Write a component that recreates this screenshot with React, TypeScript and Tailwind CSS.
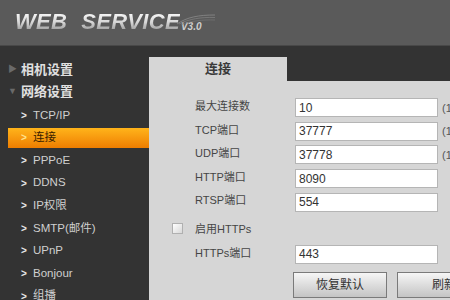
import React from "react";

const font = { fontFamily: '"Liberation Sans", Arial, "Noto Sans CJK SC", sans-serif' };

const subItems = ["TCP/IP", "连接", "PPPoE", "DDNS", "IP权限", "SMTP(邮件)", "UPnP", "Bonjour", "组播"];

const fields = [
  { label: "最大连接数", value: "10", hint: "(1~20)" },
  { label: "TCP端口", value: "37777", hint: "(1025~65535)" },
  { label: "UDP端口", value: "37778", hint: "(1025~65535)" },
  { label: "HTTP端口", value: "8090", hint: "" },
  { label: "RTSP端口", value: "554", hint: "" },
];

function Logo() {
  return (
    <div className="relative flex items-end pl-[15px] pt-[11px]">
      <span className="text-[22px] font-bold italic leading-none bg-linear-to-b from-white via-[#d8d8d8] to-[#8c8c8c] bg-clip-text text-transparent tracking-[0.3px]">
        WEB
      </span>
      <span className="ml-[14px] text-[22px] font-bold italic leading-none bg-linear-to-b from-white via-[#d8d8d8] to-[#8c8c8c] bg-clip-text text-transparent tracking-[0.3px]">
        SERVICE
      </span>
      <span className="relative ml-[1px] mb-[1px] text-[10px] font-bold italic leading-none text-[#cfcfcf]">
        V3.0
        <svg className="absolute -top-[9px] -left-[4px]" width="40" height="12" viewBox="0 0 40 12" fill="none">
          <path d="M0 11 C10 4 22 2 38 2" stroke="#8a8a8a" strokeWidth="0.8" />
          <path d="M2 11 C12 6 24 4 38 4.5" stroke="#7d7d7d" strokeWidth="0.8" />
          <path d="M4 11.5 C14 8 26 6.5 38 7" stroke="#727272" strokeWidth="0.8" />
        </svg>
      </span>
    </div>
  );
}

function Sidebar() {
  return (
    <div className="w-[149px] shrink-0 pt-[13px]">
      <div className="flex items-center h-[22px] pl-[8px]">
        <span className="text-[9px] text-[#6a6a6a] w-[13px]">▶</span>
        <span className="text-[13px] font-bold text-[#e0e0e0]">相机设置</span>
      </div>
      <div className="flex items-center h-[22px] pl-[8px]">
        <span className="text-[9px] text-[#6a6a6a] w-[13px]">▼</span>
        <span className="text-[13px] font-bold text-[#e0e0e0]">网络设置</span>
      </div>
      <div className="pt-[1px]">
        {subItems.map((item) => {
          const active = item === "连接";
          return (
            <div key={item} className="h-[22.6px] flex items-center">
              <div
                className={
                  active
                    ? "ml-[8px] flex-1 h-[20px] flex items-center pl-[13px] bg-linear-to-b from-[#ffb41a] to-[#ee7d00]"
                    : "ml-[8px] flex-1 h-[20px] flex items-center pl-[13px]"
                }
              >
                <span className={active ? "text-[10px] font-bold text-[#ffe38a] w-[12px]" : "text-[10px] font-bold text-[#e8e8e8] w-[12px]"}>
                  &gt;
                </span>
                <span className={active ? "text-[11.5px] text-[#3a2200]" : "text-[11.5px] text-[#cfcfcf]"}>{item}</span>
              </div>
            </div>
          );
        })}
      </div>
    </div>
  );
}

function Field({ label, value, hint }: { label: string; value: string; hint: string }) {
  return (
    <div className="h-[23.6px] flex items-center">
      <div className="w-[146px] shrink-0 text-[11px] text-[#454545] pl-[46px] -mt-[3px] whitespace-nowrap">{label}</div>
      <div className="w-[143px] shrink-0 h-[19px] bg-white border border-[#b5b5b5] flex items-center pl-[3px] text-[12px] text-[#333]">
        {value}
      </div>
      <div className="ml-[4px] text-[11px] text-[#555] whitespace-nowrap">{hint}</div>
    </div>
  );
}

export default function App() {
  return (
    <div className="w-[450px] h-[300px] overflow-hidden bg-[#333333] flex flex-col" style={font}>
      <div className="h-[45px] bg-[#5a5a5a] shrink-0">
        <Logo />
      </div>
      <div className="h-[1px] bg-[#484848] shrink-0" />
      <div className="flex flex-1 min-h-0">
        <Sidebar />
        <div className="flex-1 flex flex-col pt-[11px] min-w-0">
          <div className="w-[138px] h-[24px] bg-[#d6d6d6] flex items-center justify-center shrink-0">
            <span className="text-[13px] font-bold text-[#3a3a3a] -mt-[1px]">连接</span>
          </div>
          <div className="flex-1 bg-[#d6d6d6] pt-[15px] overflow-hidden">
            {fields.map((f) => (
              <Field key={f.label} {...f} />
            ))}
            <div className="h-[23.6px] mt-[3px] flex items-center">
              <div className="ml-[23px] w-[11px] h-[11px] border border-[#b0b0b0] bg-linear-to-br from-white to-[#d8d8d8]" />
              <span className="ml-[12px] text-[11px] text-[#454545]">启用HTTPs</span>
            </div>
            <div className="mt-[2px]">
              <Field label="HTTPs端口" value="443" hint="" />
            </div>
            <div className="mt-[6px] flex gap-[10px] pl-[144px]">
              <button className="w-[94px] h-[26px] shrink-0 border border-[#7a7a7a] bg-linear-to-b from-[#f6f6f6] to-[#c4c4c4] text-[12px] text-[#333]">
                恢复默认
              </button>
              <button className="w-[94px] h-[26px] shrink-0 border border-[#7a7a7a] bg-linear-to-b from-[#f6f6f6] to-[#c4c4c4] text-[12px] text-[#333]">
                刷新
              </button>
            </div>
          </div>
        </div>
      </div>
    </div>
  );
}
